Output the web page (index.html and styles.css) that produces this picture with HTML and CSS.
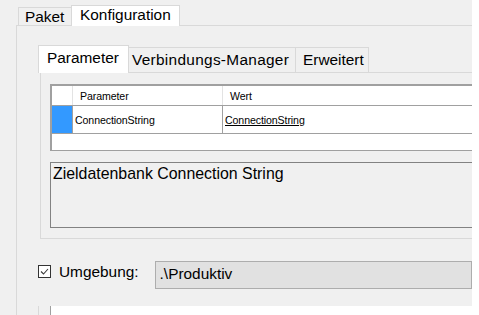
FILE: index.html
```html
<!DOCTYPE html>
<html>
<head>
<meta charset="utf-8">
<link rel="stylesheet" href="styles.css">
</head>
<body>
<div class="window">
  <div class="tabs outer-tabs">
    <div class="tab tab-paket">Paket</div>
    <div class="tab tab-konfig active">Konfiguration</div>
  </div>
  <div class="outer-page">
    <div class="inner-tabs-wrap">
      <div class="tabs inner-tabs">
        <div class="itab itab-param active">Parameter</div>
        <div class="itab itab-verb">Verbindungs-Manager</div>
        <div class="itab itab-erw">Erweitert</div>
      </div>
      <div class="inner-page">
        <div class="grid">
          <div class="grow ghead">
            <div class="gcell rowhead"></div>
            <div class="gcell cparam">Parameter</div>
            <div class="gcell cwert">Wert</div>
          </div>
          <div class="grow gdata">
            <div class="gcell rowhead sel"></div>
            <div class="gcell cparam">ConnectionString</div>
            <div class="gcell cwert"><span class="link">ConnectionString</span></div>
          </div>
          <div class="gempty"></div>
        </div>
        <div class="desc">Zieldatenbank Connection String</div>
      </div>
    </div>
    <div class="env-row">
      <span class="checkbox">
        <svg width="11" height="11" viewBox="0 0 11 11"><path d="M2 5.5 L4.5 8 L9 3" fill="none" stroke="#3c3c3c" stroke-width="1.1"/></svg>
      </span>
      <span class="env-label">Umgebung:</span>
      <div class="combo">.\Produktiv</div>
    </div>
    <div class="bottom-wrap">
      <div class="bottom-box"></div>
    </div>
  </div>
</div>
</body>
</html>
```

FILE: styles.css
```css
html, body {
  margin: 0;
  padding: 0;
  background: #ffffff;
}
.window {
  width: 472px;
  height: 315px;
  background: #f0f0f0;
  overflow: hidden;
  padding-top: 5px;
  box-sizing: border-box;
  font-family: "Liberation Sans", Arial, sans-serif;
  font-size: 15.4px;
  color: #000;
}
.tabs {
  display: flex;
  align-items: flex-end;
  position: relative;
  z-index: 1;
}
.outer-tabs {
  margin-left: 18px;
  height: 20px;
}
.tab {
  box-sizing: border-box;
  border: 1px solid #d9d9d9;
  border-bottom: none;
  background: #f0f0f0;
  line-height: 17px;
  white-space: nowrap;
}
.tab-paket {
  width: 54px;
  height: 18px;
  padding-left: 6px;
}
.tab-konfig {
  width: 109px;
  height: 21px;
  margin-left: -1px;
  margin-bottom: -1px;
  padding-left: 8px;
  background: #ffffff;
}
.outer-page {
  margin-left: 16px;
  border-top: 1px solid #d9d9d9;
  border-left: 1px solid #d9d9d9;
  height: 300px;
}
.inner-tabs-wrap {
  margin-left: 21px;
  padding-top: 19px;
}
.inner-tabs {
  height: 27px;
}
.itab {
  box-sizing: border-box;
  border: 1px solid #d9d9d9;
  border-bottom: none;
  background: #f0f0f0;
  line-height: 18px;
  padding-top: 3px;
  white-space: nowrap;
}
.itab + .itab {
  margin-left: -1px;
}
.itab-param {
  width: 91px;
  height: 28px;
  margin-bottom: -1px;
  padding-left: 8px;
  background: #ffffff;
  position: relative;
  z-index: 2;
}
.itab-verb {
  width: 168px;
  height: 25px;
  padding-left: 3px;
  letter-spacing: 0.3px;
}
.itab-erw {
  width: 74px;
  height: 25px;
  padding-left: 7px;
}
.inner-page {
  margin-left: 2px;
  border-top: 1px solid #d9d9d9;
  border-left: 1px solid #d9d9d9;
  border-bottom: 1px solid #d9d9d9;
  padding: 11px 0 10px 9px;
  width: 460px;
}
.grid {
  border-top: 2px solid #a0a0a0;
  border-left: 2px solid #a0a0a0;
  border-bottom: 1px solid #a0a0a0;
  background: #ffffff;
  font-size: 10.6px;
  letter-spacing: -0.1px;
}
.grow {
  display: flex;
  box-sizing: border-box;
  border-bottom: 1px solid #a0a0a0;
}
.ghead {
  height: 20px;
}
.gdata {
  height: 28px;
}
.gcell {
  box-sizing: border-box;
  white-space: nowrap;
}
.rowhead {
  width: 21px;
}
.cparam {
  width: 150px;
}
.cwert {
  flex: 1;
}
.ghead .gcell {
  line-height: 18px;
  padding-top: 1px;
}
.ghead .rowhead,
.ghead .cparam {
  border-right: 1px solid #e3e3e3;
}
.ghead .cparam,
.ghead .cwert {
  padding-left: 7px;
}
.gdata .gcell {
  line-height: 26px;
  padding-top: 1px;
}
.gdata .rowhead,
.gdata .cparam {
  border-right: 1px solid #a0a0a0;
}
.gdata .cparam,
.gdata .cwert {
  padding-left: 2px;
}
.rowhead.sel {
  background: #3399ff;
}
.link {
  text-decoration: underline;
}
.gempty {
  height: 16px;
}
.desc {
  margin-top: 11px;
  box-sizing: border-box;
  height: 66px;
  border: 1px solid #828282;
  padding: 2px 0 0 2px;
  font-size: 15.9px;
  line-height: 18px;
  white-space: nowrap;
}
.env-row {
  display: flex;
  align-items: flex-start;
  margin-top: 22px;
  margin-left: 21px;
  height: 28px;
}
.checkbox {
  box-sizing: border-box;
  width: 13px;
  height: 13px;
  margin-top: 4px;
  border: 1px solid #333333;
  background: #ffffff;
  display: flex;
  align-items: center;
  justify-content: center;
}
.env-label {
  margin-left: 8px;
  margin-top: 2px;
  line-height: 17px;
  white-space: nowrap;
}
.combo {
  margin-left: 16px;
  box-sizing: border-box;
  height: 28px;
  width: 330px;
  border: 1px solid #adadad;
  background: #e1e1e1;
  padding-left: 4px;
  line-height: 24px;
  white-space: nowrap;
}
.bottom-wrap {
  margin-top: 17px;
  margin-left: 21px;
  border-left: 1px solid #d9d9d9;
  height: 20px;
  padding-left: 11px;
}
.bottom-box {
  height: 20px;
  background: #ffffff;
  border-left: 1px solid #a0a0a0;
}
```
